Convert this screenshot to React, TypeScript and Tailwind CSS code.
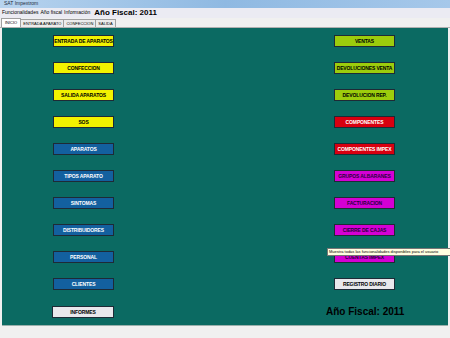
import React from 'react';

type Btn = { label: string; cls: string };

const left: Btn[] = [
  { label: 'ENTRADA DE APARATOS', cls: 'bg-[#f2f200] text-black' },
  { label: 'CONFECCION', cls: 'bg-[#f2f200] text-black' },
  { label: 'SALIDA APARATOS', cls: 'bg-[#f2f200] text-black' },
  { label: 'SOS', cls: 'bg-[#f2f200] text-black' },
  { label: 'APARATOS', cls: 'bg-[#13609f] text-white' },
  { label: 'TIPOS APARATO', cls: 'bg-[#13609f] text-white' },
  { label: 'SINTOMAS', cls: 'bg-[#13609f] text-white' },
  { label: 'DISTRIBUIDORES', cls: 'bg-[#13609f] text-white' },
  { label: 'PERSONAL', cls: 'bg-[#13609f] text-white' },
  { label: 'CLIENTES', cls: 'bg-[#13609f] text-white' },
];

const right: Btn[] = [
  { label: 'VENTAS', cls: 'bg-[#9ccc0c] text-black' },
  { label: 'DEVOLUCIONES VENTA', cls: 'bg-[#9ccc0c] text-black' },
  { label: 'DEVOLUCION REP.', cls: 'bg-[#9ccc0c] text-black' },
  { label: 'COMPONENTES', cls: 'bg-[#d80010] text-white' },
  { label: 'COMPONENTES IMPEX', cls: 'bg-[#d80010] text-white' },
  { label: 'GRUPOS ALBARANES', cls: 'bg-[#d400d4] text-[#2a0040]' },
  { label: 'FACTURACION', cls: 'bg-[#d400d4] text-[#2a0040]' },
  { label: 'CIERRE DE CAJAS', cls: 'bg-[#d400d4] text-[#2a0040]' },
  { label: 'CUENTAS IMPEX', cls: 'bg-[#d400d4] text-[#2a0040]' },
  { label: 'REGISTRO DIARIO', cls: 'bg-[#e8e8ec] text-black' },
];

function FormButton({ label, cls, wide }: Btn & { wide?: boolean }) {
  return (
    <div
      className={`flex h-[12px] items-center justify-center border border-[#1e2a36] text-[5px] font-bold leading-none tracking-tight whitespace-nowrap ${wide ? 'w-[62px]' : 'w-[61px]'} ${cls}`}
    >
      {label}
    </div>
  );
}

export default function App() {
  return (
    <div className="relative h-[338px] w-[450px] overflow-hidden bg-[#f0f0f0] font-['Liberation_Sans',sans-serif]">
      {/* title bar */}
      <div className="flex h-[8px] items-center bg-gradient-to-r from-[#b7d3ee] via-[#8fb9e2] to-[#a6c8ea] px-[4px] text-[5px] text-[#1c2c40]">
        SAT Impextrom
      </div>
      {/* menu bar */}
      <div className="flex h-[10px] items-center gap-[2px] bg-[#ebebf3] pl-[2px] text-[5px] text-black">
        <span>Funcionalidades</span>
        <span>Año fiscal</span>
        <span>Información</span>
        <span className="ml-[2px] text-[8px] font-bold leading-none">Año Fiscal: 2011</span>
      </div>
      {/* tabs */}
      <div className="flex h-[10px] items-end border-b border-[#b0b0b0] bg-[#f0f0f0] pl-[1px] text-[4px] text-black">
        <div className="flex h-[9px] items-center border border-b-0 border-[#a0a0a0] bg-white px-[3px]">INICIO</div>
        <div className="flex h-[8px] items-center border border-b-0 border-l-0 border-[#a0a0a0] bg-[#ececec] px-[2px]">ENTRADA APARATO</div>
        <div className="flex h-[8px] items-center border border-b-0 border-l-0 border-[#a0a0a0] bg-[#ececec] px-[2px]">CONFECCION</div>
        <div className="flex h-[8px] items-center border border-b-0 border-l-0 border-[#a0a0a0] bg-[#ececec] px-[2px]">SALIDA</div>
      </div>
      {/* panel */}
      <div className="mx-[2px] flex h-[298px] gap-[220px] border-b border-[#9ab0ac] bg-[#0b6a62] pl-[51px] pt-[7px]">
        <div className="flex flex-col gap-[15px]">
          {left.map((b) => (
            <FormButton key={b.label} {...b} />
          ))}
          <div className="-ml-[1px] mt-[1px]">
            <FormButton label="INFORMES" cls="bg-[#e8e8ec] text-black" wide />
          </div>
        </div>
        <div className="flex flex-col gap-[15px]">
          {right.map((b) => (
            <FormButton key={b.label} {...b} />
          ))}
          <div className="-ml-[8px] mt-[2px] text-[10px] font-bold leading-none text-black">Año Fiscal: 2011</div>
        </div>
      </div>
      {/* tooltip */}
      <div className="absolute left-[327px] top-[248px] flex h-[8px] w-[123px] items-center overflow-hidden border border-r-0 border-[#767676] bg-[#ffffe1] px-[1px] text-[4px] whitespace-nowrap text-black">
        Muestra todas las funcionalidades disponibles para el usuario
      </div>
    </div>
  );
}
